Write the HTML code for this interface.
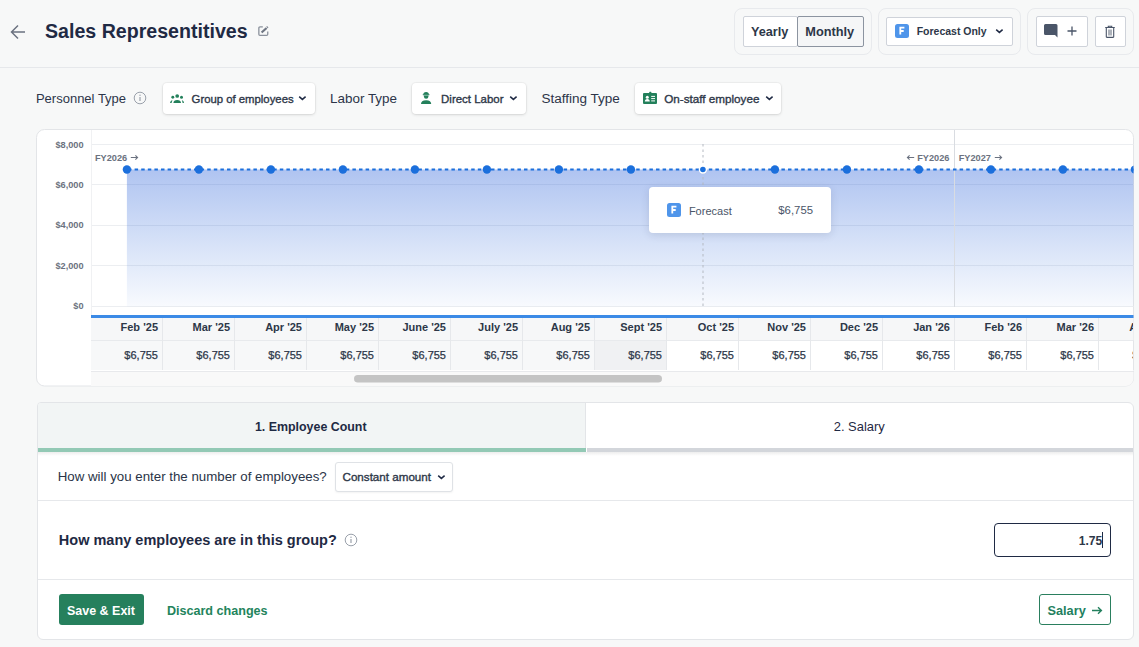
<!DOCTYPE html>
<html><head><meta charset="utf-8">
<style>
*{box-sizing:border-box;margin:0;padding:0}
html,body{width:1139px;height:647px;overflow:hidden}
body{background:#f7f8f8;font-family:"Liberation Sans",sans-serif;color:#1f2a44;position:relative}
.a{position:absolute}
.t{position:absolute;white-space:nowrap;line-height:1}
.hline{position:absolute;height:1px;background:#e6e8eb}
.grp{position:absolute;border:1px solid #e8eaed;border-radius:8px}
.btn{position:absolute;background:#fff;border:1px solid #cfd3da;border-radius:2px}
.dd{position:absolute;background:#fff;border-radius:4px;box-shadow:0 1px 3px rgba(0,0,0,.12),0 0 0 1px rgba(0,0,0,.03)}
.lbl{font-size:13.5px;color:#2c3549}
.ddt{font-size:10.7px;font-weight:normal;-webkit-text-stroke:.35px #2d3748;color:#2d3748}
.card{position:absolute;background:#fff;border:1px solid #e5e7eb;border-radius:8px;overflow:hidden}
.yl{left:40px;width:43.6px;text-align:right;font-size:9.2px;font-weight:bold;color:#6b7280}
.fy{font-size:9px;font-weight:bold;color:#6b7280}
.mh{top:322px;text-align:right;font-size:11px;font-weight:bold;color:#2d3748}
.mv{top:350px;text-align:right;font-size:11px;color:#2d3748;-webkit-text-stroke:.25px #2d3748}
</style></head><body>

<!-- header -->
<svg class="a" style="left:10px;top:24px" width="16" height="16" viewBox="0 0 16 16"><path d="M15 8H2M8 1.5L1.5 8 8 14.5" fill="none" stroke="#6b7280" stroke-width="1.5"/></svg>
<div class="t" id="title" style="left:45.00px;top:21.50px;font-size:19.6px;font-weight:bold;color:#1f2a44">Sales Representitives</div>
<svg class="a" style="left:257px;top:25px" width="13" height="13" viewBox="0 0 13 13"><path d="M5.8 1.95H3a1.15 1.15 0 0 0-1.15 1.15V9.2A1.15 1.15 0 0 0 3 10.35h6.6a1.15 1.15 0 0 0 1.15-1.15V6.4" fill="none" stroke="#8a919c" stroke-width="1.3"/><path d="M4.6 7.6L9.6 2.9" stroke="#6f7683" stroke-width="2.1"/><path d="M10.1 2.4l.6-.55" stroke="#6f7683" stroke-width="2.1"/></svg>
<div class="hline" style="left:0;top:67px;width:1139px"></div>

<div class="grp" style="left:734px;top:8px;width:138px;height:47px"></div>
<div class="btn" style="left:743px;top:16px;width:55px;height:31px"></div>
<div class="btn" style="left:797px;top:16px;width:67px;height:31px;background:#f5f6f7;border-color:#8c94a0"></div>
<div class="t" id="yearly" style="left:751.00px;top:26.07px;font-size:12.7px;font-weight:bold;color:#2d3748">Yearly</div>
<div class="t" id="monthly" style="left:805.30px;top:26.09px;font-size:12.77px;font-weight:bold;color:#2d3748">Monthly</div>

<div class="grp" style="left:878px;top:8px;width:143px;height:47px"></div>
<div class="btn" style="left:886px;top:17px;width:127px;height:29px"></div>
<div class="a" style="left:895px;top:24px;width:14px;height:14px;background:#4f95ea;border-radius:2.5px"></div>
<svg class="a" style="left:895px;top:24px" width="14" height="14" viewBox="0 0 14 14"><path d="M5.3 10.6V3.6h4.1M5.3 7h3.4" fill="none" stroke="#fff" stroke-width="1.8"/></svg>
<div class="t" id="fonly" style="left:916.70px;top:27.22px;font-size:10.49px;font-weight:bold;color:#2d3748">Forecast Only</div>
<svg class="a" style="left:995px;top:28px" width="9" height="6" viewBox="0 0 9 6"><path d="M1.2 1.6l3.2 2.8 3.2-2.8" fill="none" stroke="#1f2a44" stroke-width="1.5"/></svg>

<div class="grp" style="left:1027px;top:8px;width:107px;height:47px"></div>
<div class="btn" style="left:1036px;top:16px;width:52px;height:31px"></div>
<div class="btn" style="left:1095px;top:16px;width:31px;height:31px"></div>
<svg class="a" style="left:1043px;top:23px" width="16" height="16" viewBox="0 0 16 16"><path d="M2.5 1h10.5a1.5 1.5 0 0 1 1.5 1.5V14.5L12 12H2.5A1.5 1.5 0 0 1 1 10.5v-8A1.5 1.5 0 0 1 2.5 1z" fill="#4a5568"/></svg>
<svg class="a" style="left:1067px;top:26px" width="10" height="10" viewBox="0 0 10 10"><path d="M5 .5v9M.5 5h9" stroke="#4a5568" stroke-width="1.3"/></svg>
<svg class="a" style="left:1104px;top:25px" width="12" height="13" viewBox="0 0 12 13"><path d="M1.2 2.5h9.6M4.3 2.5V1.2h3.4v1.3M2.3 2.5v9.3a.6.6 0 0 0 .6.6h6.2a.6.6 0 0 0 .6-.6V2.5" fill="none" stroke="#4a5568" stroke-width="1.1"/><path d="M5 4.5v6M7 4.5v6" stroke="#4a5568" stroke-width=".9"/></svg>

<!-- controls row -->
<div class="t lbl" id="ptype" style="left:35.90px;top:91.87px;font-size:13.03px">Personnel Type</div>
<svg class="a" style="left:133px;top:91px" width="14" height="14" viewBox="0 0 14 14"><circle cx="7" cy="7" r="5.8" fill="none" stroke="#9aa1ab" stroke-width="1"/><path d="M7 6v4" stroke="#9aa1ab" stroke-width="1.2"/><circle cx="7" cy="4.3" r=".7" fill="#9aa1ab"/></svg>
<div class="dd" style="left:163px;top:83px;width:152px;height:31px"></div>
<svg class="a" style="left:169px;top:93px" width="16" height="11" viewBox="0 0 16 11"><circle cx="8.2" cy="3" r="1.85" fill="#23805b"/><circle cx="3.8" cy="4.3" r="1.45" fill="#23805b"/><circle cx="12.5" cy="4.3" r="1.5" fill="#23805b"/><path d="M4.4 9.9c0-1.7 1.5-2.9 3.8-2.9s3.8 1.2 3.8 2.9z" fill="#23805b"/><path d="M1 9.9c.2-1 .7-1.9 1.4-2.4h1.2c-.5.7-.9 1.5-1 2.4z" fill="#23805b"/><path d="M15 9.9c-.1-1-.5-1.9-1.2-2.5h-1c.5.7.8 1.6.8 2.5z" fill="#23805b"/></svg>
<div class="t ddt" id="dd1" style="left:191.60px;top:93.91px;font-size:11.33px">Group of employees</div>
<svg class="a" style="left:298px;top:95px" width="9" height="6" viewBox="0 0 9 6"><path d="M1.2 1.6l3.2 2.8 3.2-2.8" fill="none" stroke="#1f2a44" stroke-width="1.5"/></svg>

<div class="t lbl" id="ltype" style="left:330.10px;top:91.53px;font-size:13.43px">Labor Type</div>
<div class="dd" style="left:412px;top:83px;width:114px;height:31px"></div>
<svg class="a" style="left:420px;top:91px" width="12" height="14" viewBox="0 0 12 14"><path d="M3.3 3.6a2.8 2.7 0 0 1 5.6 0z" fill="#23805b"/><rect x="2.6" y="3.3" width="7" height="0.9" rx=".4" fill="#23805b"/><path d="M3.9 4.6h4.5v.8a2.25 2.25 0 0 1-4.5 0z" fill="#23805b"/><path d="M1 12.9c0-2.2 1.6-3.7 5.1-3.7s5.1 1.5 5.1 3.7z" fill="#23805b"/></svg>
<div class="t ddt" id="dd2" style="left:441.10px;top:93.80px;font-size:11.46px">Direct Labor</div>
<svg class="a" style="left:509px;top:95px" width="9" height="6" viewBox="0 0 9 6"><path d="M1.2 1.6l3.2 2.8 3.2-2.8" fill="none" stroke="#1f2a44" stroke-width="1.5"/></svg>

<div class="t lbl" id="stype" style="left:541.40px;top:91.95px;font-size:13.52px">Staffing Type</div>
<div class="dd" style="left:635px;top:83px;width:146px;height:31px"></div>
<svg class="a" style="left:643px;top:91px" width="15" height="13" viewBox="0 0 15 13"><rect x="0" y="2" width="14" height="11" rx="1" fill="#23805b"/><rect x="6.2" y="0.8" width="2.2" height="2.5" rx=".6" fill="#23805b"/><circle cx="4.3" cy="6.3" r="1.5" fill="#fff"/><path d="M1.8 10.5c0-1.6 1-2.5 2.5-2.5s2.5.9 2.5 2.5z" fill="#fff"/><path d="M8.2 5.4h3.8M8.2 7.6h3.8M8.2 9.9h3.8" stroke="#fff" stroke-width="1"/></svg>
<div class="t ddt" id="dd3" style="left:664.20px;top:92.99px;font-size:11.7px">On-staff employee</div>
<svg class="a" style="left:765px;top:95px" width="9" height="6" viewBox="0 0 9 6"><path d="M1.2 1.6l3.2 2.8 3.2-2.8" fill="none" stroke="#1f2a44" stroke-width="1.5"/></svg>

<!-- chart card -->
<svg class="a" style="left:0;top:0" width="1139" height="647" viewBox="0 0 1139 647">
<defs><clipPath id="cc"><rect x="36.5" y="129.5" width="1097" height="256.5" rx="8"/></clipPath><linearGradient id="fg" x1="0" y1="0" x2="0" y2="1"><stop offset="0" stop-color="#1b55d6" stop-opacity=".35"/><stop offset="1" stop-color="#1b5fd6" stop-opacity=".03"/></linearGradient><filter id="sh" x="-20%" y="-40%" width="140%" height="180%"><feDropShadow dx="0" dy="2" stdDeviation="4" flood-color="#1f2a44" flood-opacity=".12"/></filter></defs>
<rect x="36.5" y="129.5" width="1097" height="256.5" rx="8" fill="#fff" stroke="#e3e5e8"/>
<g clip-path="url(#cc)">
<rect x="91" y="130" width="1" height="185" fill="#f0f1f3"/>
<rect x="92" y="144" width="1050" height="1" fill="#eceef1"/>
<rect x="92" y="184" width="1050" height="1" fill="#eceef1"/>
<rect x="92" y="225" width="1050" height="1" fill="#eceef1"/>
<rect x="92" y="265" width="1050" height="1" fill="#eceef1"/>
<rect x="92" y="306" width="1050" height="1" fill="#eceef1"/>
<rect x="126.9" y="169.5" width="1010" height="137" fill="url(#fg)"/>
<rect x="954" y="130" width="1" height="177" fill="#d9dce1"/>
<line x1="703" y1="144" x2="703" y2="306" stroke="#b4b9c1" stroke-width="1" stroke-dasharray="2.5 3"/>
<line x1="128" y1="169.5" x2="1140" y2="169.5" stroke="#1b6fdc" stroke-width="1.8" stroke-dasharray="3.5 3.1"/>
<circle cx="126.9" cy="169.5" r="4.2" fill="#1b6fdc"/>
<circle cx="198.9" cy="169.5" r="4.2" fill="#1b6fdc"/>
<circle cx="270.9" cy="169.5" r="4.2" fill="#1b6fdc"/>
<circle cx="342.9" cy="169.5" r="4.2" fill="#1b6fdc"/>
<circle cx="414.9" cy="169.5" r="4.2" fill="#1b6fdc"/>
<circle cx="486.9" cy="169.5" r="4.2" fill="#1b6fdc"/>
<circle cx="558.9" cy="169.5" r="4.2" fill="#1b6fdc"/>
<circle cx="630.9" cy="169.5" r="4.2" fill="#1b6fdc"/>
<circle cx="702.9" cy="169.5" r="4.2" fill="#fff"/><circle cx="702.9" cy="169.5" r="2.8" fill="#1b6fdc"/>
<circle cx="774.9" cy="169.5" r="4.2" fill="#1b6fdc"/>
<circle cx="846.9" cy="169.5" r="4.2" fill="#1b6fdc"/>
<circle cx="918.9" cy="169.5" r="4.2" fill="#1b6fdc"/>
<circle cx="990.9" cy="169.5" r="4.2" fill="#1b6fdc"/>
<circle cx="1062.9" cy="169.5" r="4.2" fill="#1b6fdc"/>
<circle cx="1134.9" cy="169.5" r="4.2" fill="#1b6fdc"/>
<rect x="91" y="315" width="1050" height="3" fill="#3b8ae6"/>
<rect x="91" y="318" width="1050" height="22" fill="#f6f7f8"/>
<rect x="91" y="340" width="504" height="30" fill="#f7f8f9"/>
<rect x="595" y="340" width="72" height="30" fill="#f0f1f3"/>
<rect x="91" y="340" width="1050" height="1" fill="#e8eaed"/>
<rect x="91" y="370" width="1050" height="1" fill="#ffffff"/><rect x="91" y="371" width="1050" height="1" fill="#e8e9ec"/>
<rect x="162.0" y="318" width="1" height="52" fill="#e6e8eb"/>
<rect x="234.0" y="318" width="1" height="52" fill="#e6e8eb"/>
<rect x="306.0" y="318" width="1" height="52" fill="#e6e8eb"/>
<rect x="378.0" y="318" width="1" height="52" fill="#e6e8eb"/>
<rect x="450.0" y="318" width="1" height="52" fill="#e6e8eb"/>
<rect x="522.0" y="318" width="1" height="52" fill="#e6e8eb"/>
<rect x="594.0" y="318" width="1" height="52" fill="#e6e8eb"/>
<rect x="666.0" y="318" width="1" height="52" fill="#e6e8eb"/>
<rect x="738.0" y="318" width="1" height="52" fill="#e6e8eb"/>
<rect x="810.0" y="318" width="1" height="52" fill="#e6e8eb"/>
<rect x="882.0" y="318" width="1" height="52" fill="#e6e8eb"/>
<rect x="954.0" y="318" width="1" height="52" fill="#e6e8eb"/>
<rect x="1026.0" y="318" width="1" height="52" fill="#e6e8eb"/>
<rect x="1098.0" y="318" width="1" height="52" fill="#e6e8eb"/>
<rect x="1170.0" y="318" width="1" height="52" fill="#e6e8eb"/>
<rect x="91" y="372" width="1050" height="14" fill="#f9f9f9"/>
<rect x="354" y="375" width="308" height="7.5" rx="3.75" fill="#c4c4c4"/>
</g>
</svg>
<div class="a" style="left:0;top:0;width:1133px;height:647px;overflow:hidden">
<div class="t yl" style="top:140.5px">$8,000</div>
<div class="t yl" style="top:180.5px">$6,000</div>
<div class="t yl" style="top:221px">$4,000</div>
<div class="t yl" style="top:261.5px">$2,000</div>
<div class="t yl" style="top:302px">$0</div>
<div class="t fy" id="fy1" style="left:94.90px;top:153.80px;font-size:9.21px">FY2026</div>
<div class="t fy" id="fy2" style="left:917.20px;top:153.80px;font-size:9.21px">FY2026</div>
<svg class="a" style="left:130px;top:154px" width="9" height="7" viewBox="0 0 9 7"><path d="M.8 3.5h7M5.4 1.4l2.2 2.1-2.2 2.1" fill="none" stroke="#6b7280" stroke-width="1.05"/></svg>
<svg class="a" style="left:906px;top:154px" width="9" height="7" viewBox="0 0 9 7"><path d="M8.2 3.5h-7M3.6 1.4L1.4 3.5l2.2 2.1" fill="none" stroke="#6b7280" stroke-width="1.05"/></svg>
<svg class="a" style="left:994px;top:154px" width="9" height="7" viewBox="0 0 9 7"><path d="M.8 3.5h7M5.4 1.4l2.2 2.1-2.2 2.1" fill="none" stroke="#6b7280" stroke-width="1.05"/></svg>
<div class="t fy" id="fy3" style="left:958.70px;top:153.80px;font-size:9.21px">FY2027</div>
<div class="t mh" style="left:90.5px;width:67.5px">Feb '25</div>
<div class="t mv" style="left:90.5px;width:67.5px">$6,755</div>
<div class="t mh" style="left:162.5px;width:67.5px">Mar '25</div>
<div class="t mv" style="left:162.5px;width:67.5px">$6,755</div>
<div class="t mh" style="left:234.5px;width:67.5px">Apr '25</div>
<div class="t mv" style="left:234.5px;width:67.5px">$6,755</div>
<div class="t mh" style="left:306.5px;width:67.5px">May '25</div>
<div class="t mv" style="left:306.5px;width:67.5px">$6,755</div>
<div class="t mh" style="left:378.5px;width:67.5px">June '25</div>
<div class="t mv" style="left:378.5px;width:67.5px">$6,755</div>
<div class="t mh" style="left:450.5px;width:67.5px">July '25</div>
<div class="t mv" style="left:450.5px;width:67.5px">$6,755</div>
<div class="t mh" style="left:522.5px;width:67.5px">Aug '25</div>
<div class="t mv" style="left:522.5px;width:67.5px">$6,755</div>
<div class="t mh" style="left:594.5px;width:67.5px">Sept '25</div>
<div class="t mv" style="left:594.5px;width:67.5px">$6,755</div>
<div class="t mh" style="left:666.5px;width:67.5px">Oct '25</div>
<div class="t mv" style="left:666.5px;width:67.5px">$6,755</div>
<div class="t mh" style="left:738.5px;width:67.5px">Nov '25</div>
<div class="t mv" style="left:738.5px;width:67.5px">$6,755</div>
<div class="t mh" style="left:810.5px;width:67.5px">Dec '25</div>
<div class="t mv" style="left:810.5px;width:67.5px">$6,755</div>
<div class="t mh" style="left:882.5px;width:67.5px">Jan '26</div>
<div class="t mv" style="left:882.5px;width:67.5px">$6,755</div>
<div class="t mh" style="left:954.5px;width:67.5px">Feb '26</div>
<div class="t mv" style="left:954.5px;width:67.5px">$6,755</div>
<div class="t mh" style="left:1026.5px;width:67.5px">Mar '26</div>
<div class="t mv" style="left:1026.5px;width:67.5px">$6,755</div>
<div class="t mh" style="left:1098.5px;width:67.5px">Apr '26</div>
<div class="t mv" style="left:1098.5px;width:67.5px">$6,755</div>
</div>
<div class="a" style="left:649px;top:187px;width:182px;height:45.5px;background:#fff;border-radius:4px;box-shadow:0 2px 8px rgba(31,42,68,.13)"></div>
<div class="a" style="left:667px;top:203px;width:14px;height:14px;background:#4f95ea;border-radius:2.5px"></div>
<svg class="a" style="left:667px;top:203px" width="14" height="14" viewBox="0 0 14 14"><path d="M5.3 10.6V3.6h4.1M5.3 7h3.4" fill="none" stroke="#fff" stroke-width="1.8"/></svg>
<div class="t" id="ttf" style="left:688.90px;top:205.57px;font-size:11.02px;color:#4a5568">Forecast</div>
<div class="t" id="ttv" style="left:778.30px;top:205.29px;font-size:11.35px;color:#4a5568">$6,755</div>


<!-- bottom card -->
<div class="a" style="left:36.5px;top:401.5px;width:1097px;height:238.5px;background:#fff;border:1px solid #e3e5e8;border-radius:4px 6px 6px 6px;overflow:hidden">
<div class="a" style="left:0;top:0;width:548.5px;height:45.5px;background:#f2f5f5;border-right:1px solid #e3e5e8"></div>
<div class="a" style="left:0;top:45.5px;width:548px;height:3.7px;background:#93c9b5"></div>
<div class="a" style="left:549.5px;top:45.5px;width:550px;height:3.7px;background:#d3d6db"></div>
<div class="a" style="left:0;top:49.2px;width:1097px;height:4px;background:linear-gradient(rgba(0,0,0,.07),rgba(0,0,0,0))"></div>
<div class="a" style="left:0;top:97.5px;width:1097px;height:1px;background:#e6e8eb"></div>
<div class="a" style="left:0;top:176.5px;width:1097px;height:1px;background:#e6e8eb"></div>
</div>
<div class="t" id="tab1" style="left:36.5px;width:548.5px;text-align:center;top:420.89px;font-size:12.41px;font-weight:bold;color:#1f2a44">1. Employee Count</div>
<div class="t" id="tab2" style="left:585px;width:548.5px;text-align:center;top:421.44px;font-size:12.95px;color:#1f2a44">2. Salary</div>
<div class="t" id="q1" style="left:57.70px;top:469.93px;font-size:13.31px;color:#2a3447">How will you enter the number of employees?</div>
<div class="a" style="left:334.5px;top:462px;width:118.5px;height:30px;background:#fff;border:1px solid #dfe2e6;border-radius:3px;box-shadow:0 1px 2px rgba(0,0,0,.05)"></div>
<div class="t ddt" id="dd4" style="left:342.50px;top:471.24px;font-size:11.64px">Constant amount</div>
<svg class="a" style="left:436.5px;top:474px" width="9" height="6" viewBox="0 0 9 6"><path d="M1.2 1.6l3.2 2.8 3.2-2.8" fill="none" stroke="#1f2a44" stroke-width="1.5"/></svg>
<div class="t" id="q2" style="left:58.80px;top:532.51px;font-size:14.51px;font-weight:bold;color:#1f2a44">How many employees are in this group?</div>
<svg class="a" style="left:344px;top:533px" width="14" height="14" viewBox="0 0 14 14"><circle cx="7" cy="7" r="5.8" fill="none" stroke="#9aa1ab" stroke-width="1"/><path d="M7 6v4" stroke="#9aa1ab" stroke-width="1.2"/><circle cx="7" cy="4.3" r=".7" fill="#9aa1ab"/></svg>
<div class="a" style="left:994px;top:523px;width:117px;height:33.5px;background:#fff;border:1.3px solid #1f2a44;border-radius:4px"></div>
<div class="t" id="inp" style="left:1000px;width:102.26px;text-align:right;top:534.69px;font-size:12.06px;font-weight:bold;color:#2d3748">1.75</div>
<div class="a" style="left:1102px;top:532px;width:1px;height:15.5px;background:#1f2a44"></div>
<div class="a" style="left:59px;top:594px;width:85px;height:31px;background:#26805d;border-radius:3px"></div>
<div class="t" id="save" style="left:66.90px;top:604.61px;font-size:12.51px;font-weight:bold;color:#fff">Save &amp; Exit</div>
<div class="t" id="disc" style="left:166.90px;top:604.55px;font-size:12.58px;font-weight:bold;color:#23845c">Discard changes</div>
<div class="a" style="left:1039px;top:594px;width:72px;height:31px;background:#fff;border:1px solid #2a7f5e;border-radius:3px"></div>
<div class="t" id="sal" style="left:1047.50px;top:605.11px;font-size:12.74px;font-weight:bold;color:#23805e">Salary</div><svg class="a" style="left:1091px;top:606px" width="12" height="9" viewBox="0 0 12 9"><path d="M1 4.5h9.3M7 1.3l3.4 3.2L7 7.7" fill="none" stroke="#23805e" stroke-width="1.4"/></svg>


</body></html>
